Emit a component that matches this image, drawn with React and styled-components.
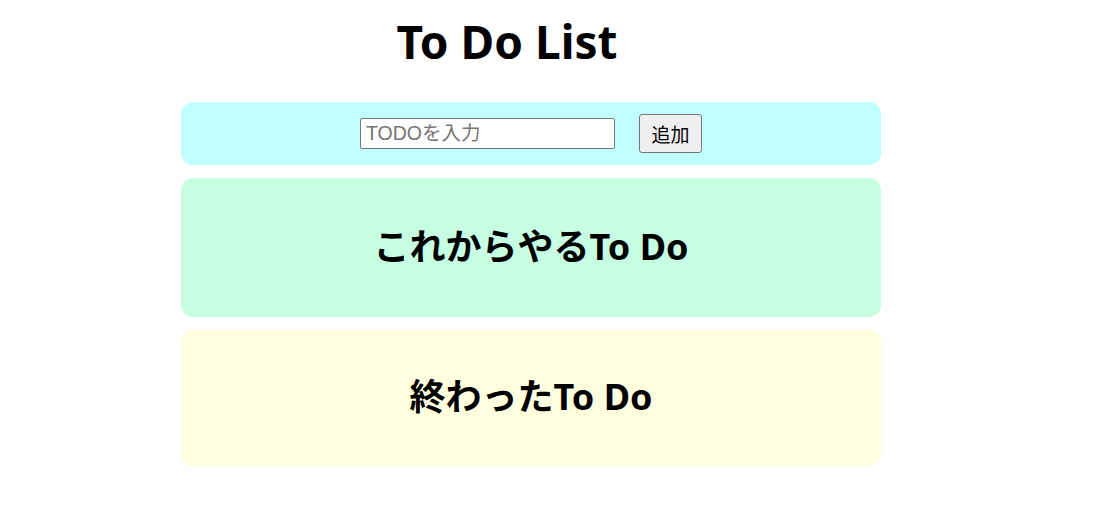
import React from 'react'
import styled, { createGlobalStyle } from 'styled-components'

const GlobalStyle = createGlobalStyle`
  body {
    margin: 0;
    background: #fff;
    font-family: "Noto Sans", "Noto Sans CJK JP", sans-serif;
  }
`

const Page = styled.div`
  display: flex;
  flex-direction: column;
  align-items: flex-start;
  padding-top: 9px;
`

const Title = styled.h1`
  width: 1014px;
  margin: 0 0 29px;
  text-align: center;
  font-size: 46px;
  line-height: 64px;
  font-weight: 700;
  color: #000;
`

const Column = styled.div`
  display: flex;
  flex-direction: column;
  gap: 13px;
  width: 700px;
  margin-left: 181px;
`

const InputArea = styled.div`
  display: flex;
  align-items: center;
  justify-content: center;
  gap: 24px;
  height: 63px;
  background: #c1ffff;
  border-radius: 12px;
`

const TextInput = styled.input`
  box-sizing: border-box;
  width: 255px;
  height: 31px;
  padding: 0 5px;
  border: 1px solid #767676;
  border-radius: 2px;
  font-family: "Liberation Sans", "Noto Sans CJK JP", sans-serif;
  font-size: 19.5px;
  color: #000;
  &::placeholder {
    color: #757575;
  }
`

const AddButton = styled.button`
  box-sizing: border-box;
  width: 63px;
  height: 39px;
  background: #efefef;
  border: 1px solid #767676;
  border-radius: 3px;
  font-family: "Liberation Sans", "Noto Sans CJK JP", sans-serif;
  font-size: 19px;
  color: #000;
`

const Area = styled.div`
  box-sizing: border-box;
  display: flex;
  align-items: center;
  justify-content: center;
  height: ${p => p.$h}px;
  padding-bottom: ${p => p.$pb}px;
  background: ${p => p.$bg};
  border-radius: 12px;
`

const AreaTitle = styled.h2`
  margin: 0;
  font-size: 36px;
  font-weight: 700;
  color: #000;
`

export default function App() {
  return (
    <>
      <GlobalStyle />
      <Page>
        <Title>To Do List</Title>
        <Column>
          <InputArea>
            <TextInput placeholder="TODOを入力" />
            <AddButton>追加</AddButton>
          </InputArea>
          <Area $bg="#c6ffe2" $h={139} $pb={6}>
            <AreaTitle>これからやるTo Do</AreaTitle>
          </Area>
          <Area $bg="#ffffe0" $h={136} $pb={8}>
            <AreaTitle>終わったTo Do</AreaTitle>
          </Area>
        </Column>
      </Page>
    </>
  )
}
